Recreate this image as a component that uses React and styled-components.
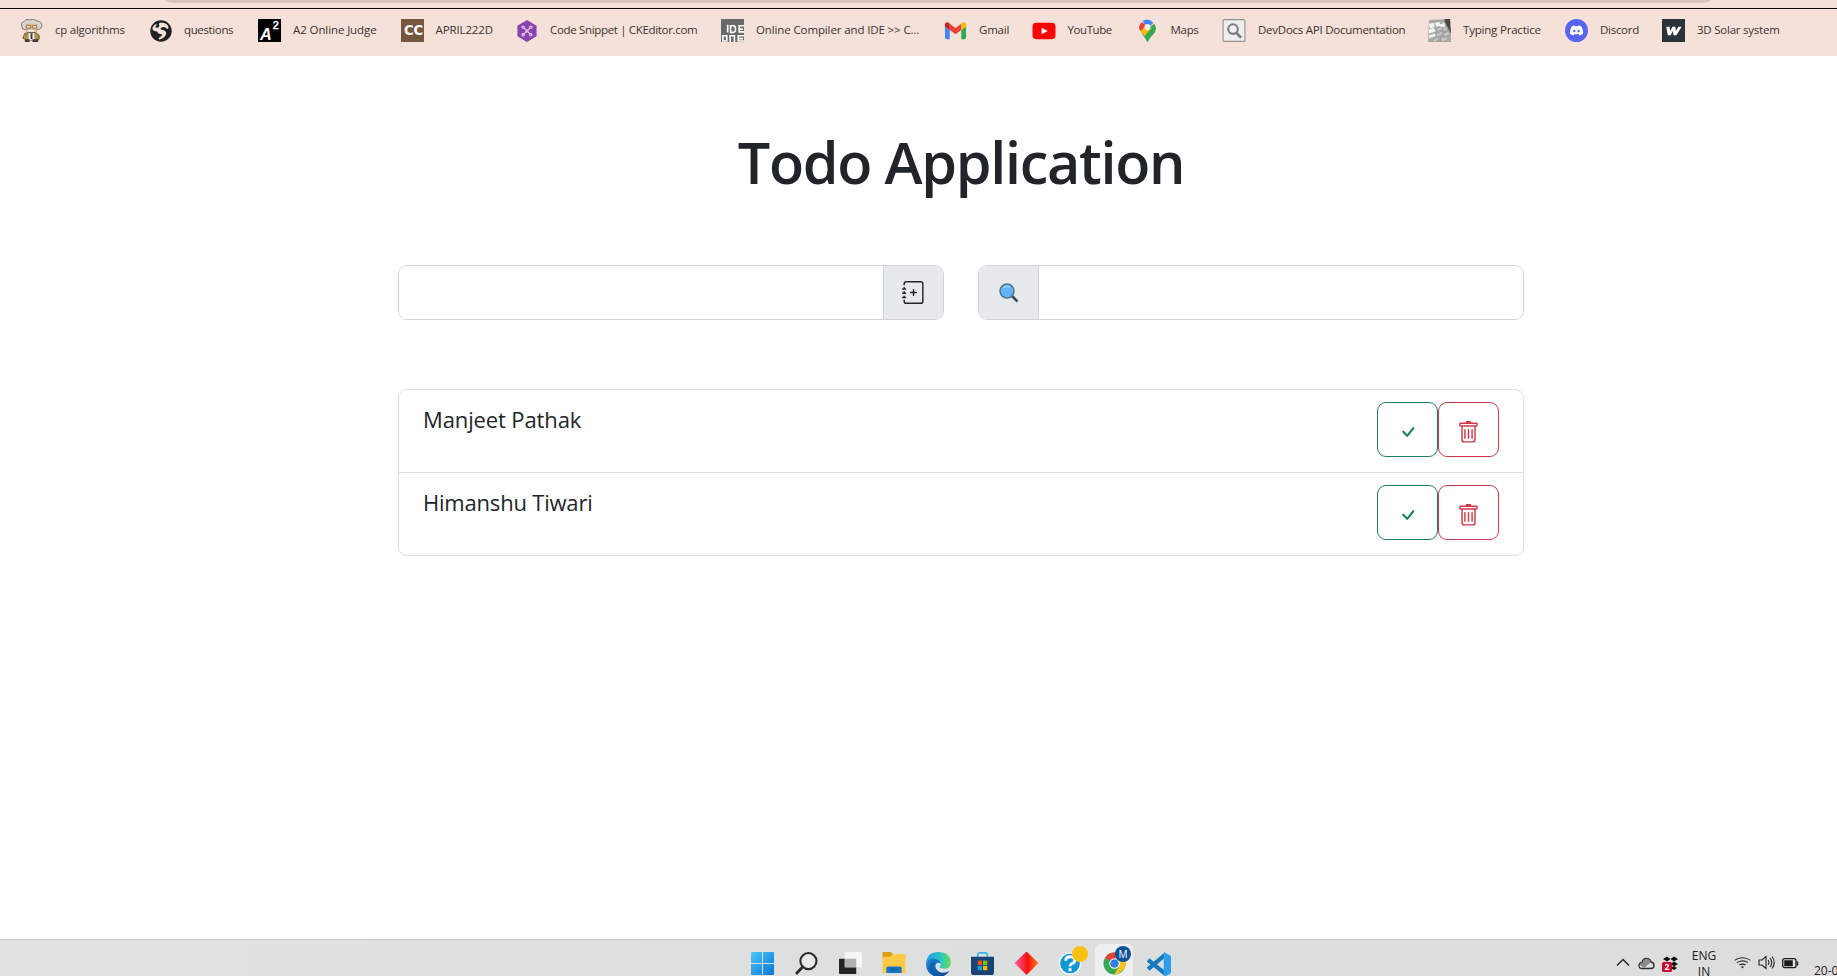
import React from "react";
import styled, { createGlobalStyle } from "styled-components";
import { BsJournalPlus, BsTrash, BsCheck, BsWifi } from "react-icons/bs";
import { FaDiscord } from "react-icons/fa";

const GlobalStyle = createGlobalStyle`
  * { box-sizing: border-box; }
  body { margin: 0; background: #fff; color: #212529; font-family: "Segoe UI", "Open Sans", "Noto Sans", sans-serif; }
  svg { display: block; }
`;

const Screen = styled.div`
  display: flex;
  flex-direction: column;
  width: 1837px;
  height: 976px;
  overflow: hidden;
`;

const AddressStrip = styled.div`
  height: 9px;
  flex: none;
  padding-left: 165px;
  background: #f5e1da;
  border-bottom: 1px solid #0b0808;
`;
const AddressField = styled.div`
  width: 1546px;
  height: 3px;
  background: #dac6be;
  border-radius: 0 0 10px 10px / 0 0 3px 3px;
`;

const BookmarkBar = styled.nav`
  display: flex;
  flex: none;
  height: 47px;
  padding: 0 0 5px 20px;
  background: #f5e1da;
`;
const Bookmark = styled.a`
  display: flex;
  flex: none;
  align-items: center;
  gap: 12px;
  width: ${(p) => p.$width}px;
  font-size: 11.5px;
  letter-spacing: ${(p) => p.$spacing}px;
  line-height: 16px;
  color: #3b3231;
  white-space: nowrap;
  svg { flex: none; }
`;

const Main = styled.main`
  flex: 1;
  display: flex;
  flex-direction: column;
  width: 1126px;
  margin-left: 398px;
`;
const Title = styled.h1`
  margin: 69px 0 0;
  height: 74px;
  line-height: 74px;
  font-size: 57.5px;
  font-weight: 600;
  letter-spacing: -1.3px;
  text-align: center;
`;
const Fields = styled.div`
  display: flex;
  justify-content: space-between;
  margin-top: 66px;
`;
const InputGroup = styled.div`
  display: flex;
  width: 546px;
  height: 55px;
  border: 1px solid #ced4da;
  border-radius: 9px;
  overflow: hidden;
`;
const TextInput = styled.input`
  flex: 1;
  min-width: 0;
  border: 0;
  outline: 0;
  padding: 0 17px;
  font: inherit;
  background: #fff;
`;
const Addon = styled.button`
  display: flex;
  align-items: center;
  justify-content: center;
  width: 60px;
  padding: 0;
  border: 0 solid #ced4da;
  border-${(p) => p.$divider}-width: 1px;
  color: #212529;
  background: #e7eaed;
`;

const TodoList = styled.ul`
  list-style: none;
  margin: 69px 0 0;
  padding: 0;
  border: 1px solid #dedfe0;
  border-radius: 9px;
`;
const TodoItem = styled.li`
  display: flex;
  justify-content: space-between;
  height: ${(p) => (p.$last ? 82 : 83)}px;
  padding: 12px 24px 0 24px;
  border-bottom: ${(p) => (p.$last ? 0 : 1)}px solid #dedfe0;
`;
const TodoText = styled.span`
  font-size: 22px;
  line-height: 34px;
  letter-spacing: ${(p) => p.$spacing}px;
`;
const Actions = styled.div`
  display: flex;
`;
const ActionButton = styled.button`
  display: flex;
  align-items: center;
  justify-content: center;
  width: 61px;
  height: 55px;
  padding: 5px 0 0;
  border: 1px solid ${(p) => p.$color};
  border-radius: 9px;
  color: ${(p) => p.$color};
  background: #fff;
`;

const Taskbar = styled.footer`
  display: flex;
  flex: none;
  height: 37px;
  border-top: 1px solid #c9cccd;
  background: linear-gradient(90deg, #e1e3e3, #dddede 55%, #dddddd);
  overflow: hidden;
`;
const Apps = styled.div`
  display: flex;
  margin-left: 740px;
`;
const AppCell = styled.div`
  display: flex;
  position: relative;
  flex: none;
  justify-content: center;
  width: 38px;
  height: 44px;
  margin: 4px 3px 0;
  padding-top: 8px;
  border-radius: 5px;
  background: ${(p) => (p.$active ? "#eeeeef" : "transparent")};
`;
const Badge = styled.span`
  position: absolute;
  left: ${(p) => p.$left}px;
  top: 2px;
  width: 16px;
  height: 16px;
  border-radius: 50%;
  background: ${(p) => p.$color};
  color: #fff;
  font-size: 10px;
  line-height: 16px;
  text-align: center;
`;
const Tray = styled.div`
  display: flex;
  margin-left: 436px;
  color: #222;
`;
const TrayIcon = styled.div`
  flex: none;
  width: ${(p) => p.$width}px;
  padding-top: ${(p) => p.$top}px;
`;
const Language = styled.div`
  flex: none;
  width: 26px;
  margin: 8px 17px 0 0;
  font-size: 12px;
  line-height: 16px;
  text-align: center;
`;
const DateText = styled.div`
  flex: none;
  padding-top: 23px;
  font-size: 12px;
  line-height: 16px;
  white-space: nowrap;
`;

const Icon = ({ children, w = 23, h = 23, ...rest }) => (
  <svg width={w} height={h} viewBox="0 0 24 24" {...rest}>{children}</svg>
);

const Professor = () => (
  <Icon>
    <path d="M2 8Q0 4 4 3Q6-1 10 1Q14-1 18 2Q23 3 23 7Q22 11 19 11L5 11Q2 11 2 8z" fill="#d8d6d2" stroke="#77716d" />
    <path d="M6 5h12v8l-3 3H9l-3-3z" fill="#dcae80" />
    <path d="M6.500 7h4.500v2.500H6.500zM13 7h4.500v2.500H13z" fill="#eee4c8" stroke="#80694c" strokeWidth=".8" />
    <path d="M8 12q4-2 8 0v2H8z" fill="#eee" />
    <path d="M5 15l4-1h7l4 3v4l-4 1H7l-4-2z" fill="#b4914f" stroke="#6d5637" />
    <path d="M9 15h6v7H9z" fill="#f3f1ed" /><path d="M11 15h2v6h-2z" fill="#36354b" />
    <path d="M5 21h5v3H5zM13 21h6v3h-6z" fill="#423e46" />
  </Icon>
);
const Globe = () => (
  <Icon>
    <circle cx="12.500" cy="12.500" r="11.200" fill="#202124" />
    <path d="M11.500 4Q18 3 20 7.500 21 10 19 10.500 17 8 14 8.500 11 9.500 12.500 11 17 11.500 18 14.500 17.500 19.500 11 21.500 9.500 21 10.500 19.500 14 18 13.500 16 9 15.500 8.500 13 3.500 13 3.500 9.500 5 6 8 5 8 7 6.500 8.500 9 10 11 7.500 9.500 5 11.500 4z" fill="#f5e1da" />
  </Icon>
);
const A2 = () => (
  <Icon>
    <path fill="#020202" d="M0 0h24v24H0z" />
    <text x="2" y="21.500" fontFamily="Liberation Sans" fontSize="17" fontWeight="700" fontStyle="italic" fill="#fff">A</text>
    <text x="15.5" y="10.500" fontFamily="Liberation Sans" fontSize="11.5" fill="#fff" stroke="#fff" strokeWidth=".5">2</text>
  </Icon>
);
const CodeChef = () => (
  <Icon>
    <path fill="#75563f" d="M0 0h24v24H0z" />
    <text x="3" y="17" fontFamily="DejaVu Sans" fontSize="14" fontWeight="700" textLength="20" lengthAdjust="spacingAndGlyphs" fill="#fff">CC</text>
  </Icon>
);
const CKEditor = () => (
  <Icon>
    <path d="M12.5 1L22.5 7v11l-10 6-10-6V7z" fill="#8745ab" />
    <g fill="none" stroke="#efcafa" strokeWidth="1.2">
      <path d="M9.500 9.500l2 2h2l2-2M9.500 15.500l2-2h2l2 2M11.500 11.500v2h2v-2z" />
      <circle cx="8.500" cy="8.500" r="1.200" /><circle cx="16.500" cy="8.500" r="1.200" />
      <circle cx="8.500" cy="16.500" r="1.200" /><circle cx="16.500" cy="16.500" r="1.200" />
    </g>
  </Icon>
);
const Ideone = () => (
  <Icon fill="none" stroke="#fff" strokeWidth="1.7">
    <path fill="#696969" stroke="none" d="M0 0h24v24H0z" />
    <path d="M7 6v8M10 7h3.500l1.500 1.500v4L13.500 14H10zM24 7h-5v6.500h5M19 10.500h4M2 17.500h4V23H2zM9.500 24v-6.500H14V24M24 17.500h-6V23h6M18 20.500h5" />
  </Icon>
);
const Gmail = () => (
  <Icon>
    <path fill="#4285f4" d="M1 8l5 3.500V21H3q-2 0-2-2z" />
    <path fill="#34a853" d="M18 11.500L23 8v11q0 2-2 2h-3z" />
    <path fill="#ea4335" d="M6 5l6 4.500L18 5v6.500L12 16l-6-4.500z" />
    <path fill="#c5221f" d="M1 8V6q0-4 4-2l1 1v6.500z" />
    <path fill="#fbbc04" d="M23 8V6q0-4-4-2l-1 1v6.500z" />
  </Icon>
);
const YouTube = () => (
  <Icon w={24}>
    <rect y="4" width="24" height="17" rx="4" fill="#f00" />
    <path d="M9.500 9l6.500 3.500L9.500 16z" fill="#fff" />
  </Icon>
);
const Maps = () => (
  <Icon>
    <path fill="#34a853" d="M12 24q-1 0-1.300-2L6 15 19 5q4 6-1 11-4 4-5 7z" />
    <path fill="#4285f4" d="M7 2q6-4 11 2l-6 7z" />
    <path fill="#ea4335" d="M6 3Q1 8 5 13L11 7z" />
    <path fill="#fbbc04" d="M5 13l4 5 7-9-8 0z" />
    <circle cx="12" cy="8.500" r="3.200" fill="#f6ece8" />
  </Icon>
);
const DevDocs = () => (
  <Icon w={24}>
    <rect x=".6" y=".6" width="22.800" height="22.800" rx="1" fill="#eee" stroke="#929292" strokeWidth="1.200" />
    <circle cx="11" cy="10.500" r="5" fill="none" stroke="#7b7e7b" strokeWidth="2.200" />
    <path d="M14.500 14.500l5 5" stroke="#7b7e7b" strokeWidth="2.800" />
  </Icon>
);
const Keyboard = () => (
  <Icon>
    <path d="M1 1l20-1 3 11v13H0z" fill="#a9a9a6" />
    <path d="M17 0h6l1 15L18 4z" fill="#454544" />
    <path d="M1 5l5-1 1 4-5 2zM7 4l5-1 1 4-4 1zM12 6l5-2 1 4-5 1zM1 11l5-2 2 4-7 2zM1 17l6-2 1 3-7 2z" fill="#f5f5f3" />
    <path d="M9 10l5-2 2 3-6 2zM15 9l4-1 2 4-5 1zM8 16l6-3 2 3-7 3zM16 15l5-2 2 3-6 3zM4 22l6-3 2 3-5 2zM13 20l6-2 2 3-6 3z" fill="#c6c6c3" stroke="#92928f" strokeWidth=".6" />
  </Icon>
);
const Discord = () => (
  <Icon>
    <circle cx="12" cy="12" r="12" fill="#5865f2" />
    <FaDiscord x="4.500" y="4.500" size={15} color="#fff" />
  </Icon>
);
const Webflow = () => (
  <Icon>
    <path fill="#2a333a" d="M0 0h24v24H0z" />
    <path d="M4.500 8H8l.5 4.500L11 8h3l.5 4.500L17 8h3.500l-5.500 9h-3l-.6-4.500L9 17H6z" fill="#fff" />
  </Icon>
);

const bookmarks = [
  ["cp algorithms", Professor, 129, -0.25],
  ["questions", Globe, 109, -0.36],
  ["A2 Online Judge", A2, 142.5, -0.1],
  ["APRIL222D", CodeChef, 114.5, -0.12],
  ["Code Snippet | CKEditor.com", CKEditor, 206, -0.33],
  ["Online Compiler and IDE >> C...", Ideone, 223, -0.12],
  ["Gmail", Gmail, 87.5, -0.2],
  ["YouTube", YouTube, 104, -0.42],
  ["Maps", Maps, 86.5, -0.3],
  ["DevDocs API Documentation", DevDocs, 206, -0.25],
  ["Typing Practice", Keyboard, 137, -0.2],
  ["Discord", Discord, 97, -0.28],
  ["3D Solar system", Webflow, 120, -0.23],
];

const Magnifier = () => (
  <svg width="22" height="22" viewBox="0 0 22 22">
    <path d="M14 14l5.500 5.500" stroke="#414b55" strokeWidth="2.600" />
    <circle cx="9" cy="9" r="7" fill="#61b4f8" stroke="#55728c" strokeWidth="1.500" />
    <path d="M5.500 6Q8.500 3 12 5.500" fill="none" stroke="#9bd2fb" strokeWidth="1.500" />
  </svg>
);

const Windows = () => (
  <Icon>
    <defs><linearGradient id="win" x2="1" y2="1"><stop stopColor="#4bc9fb" /><stop offset="1" stopColor="#0876d4" /></linearGradient></defs>
    <path fill="url(#win)" d="M1 0h10.500v11.500H0V1q0-1 1-1zM12.500 0H23q1 0 1 1v10.500H12.500zM0 12.500h11.500V24H1q-1 0-1-1zM12.500 12.500H24V23q0 1-1 1H12.500z" />
  </Icon>
);
const Search = () => (
  <Icon fill="none" stroke="#292929">
    <circle cx="14" cy="9.500" r="8.400" strokeWidth="2.200" fill="#e8e9e9" />
    <path d="M8 15.500L2 22" strokeWidth="3" strokeLinecap="round" />
  </Icon>
);
const TaskView = () => (
  <Icon>
    <path fill="#242424" d="M0 7h18v16H1q-1 0-1-1z" />
    <path fill="#f5f5f5" d="M6 0h17q1 0 1 1v15H6z" />
    <path fill="#b2b2b2" d="M6 7h12v9H6z" />
  </Icon>
);
const Explorer = () => (
  <Icon w={24}>
    <path d="M0 1q0-1 1-1h8l2 3v3H0z" fill="#dd9d13" />
    <path d="M0 5h8l3-3h12q1 0 1 1v19H0z" fill="#fdc947" />
    <path d="M4 22v-5q0-2 2-2h12q2 0 2 2v5z" fill="#1675c2" />
    <path d="M7 18h10" stroke="#0e5796" />
  </Icon>
);
const Edge = () => (
  <Icon w={25} h={25}>
    <defs>
      <linearGradient id="edgeTop"><stop stopColor="#239fe4" /><stop offset=".55" stopColor="#26c2c6" /><stop offset="1" stopColor="#6bdf57" /></linearGradient>
      <linearGradient id="edgeLow" x2="1" y2="1"><stop stopColor="#1789d8" /><stop offset="1" stopColor="#123f91" /></linearGradient>
    </defs>
    <path d="M0 11Q1 0 12 0q11 0 12 10 0 6-6 6-5 0-5-2 2-2 0-4-3-4-8-2-4 1-5 3z" fill="url(#edgeTop)" />
    <path d="M0 12Q1 6.500 7 6.500q6 0 7 4.500-4-2-5 2 0 6 7 7 4 0 6.500-2Q19 24 12 24 1 23 0 12z" fill="url(#edgeLow)" />
    <path d="M9 8.500q-3 3-2 7 2 7 9 7.500-2 1-4 1Q5 23 4 17q-1-6 5-8.500z" fill="#0f5cab" />
  </Icon>
);
const Store = () => (
  <Icon>
    <path d="M7 7V3q0-2 2-2h6q2 0 2 2v4" fill="none" stroke="#37b4e8" strokeWidth="1.800" />
    <path d="M0 5h24v16q0 3-3 3H3q-3 0-3-3z" fill="#1b4475" />
    <path d="M7 9h4.500v4.500H7z" fill="#f05024" /><path d="M12.500 9H17v4.500h-4.500z" fill="#7fba00" />
    <path d="M7 14.500h4.500V19H7z" fill="#0aa5ef" /><path d="M12.500 14.500H17V19h-4.500z" fill="#ffb901" />
  </Icon>
);
const Diamond = () => (
  <Icon w={25}>
    <defs><linearGradient id="dia"><stop stopColor="#ff5ba4" /><stop offset=".5" stopColor="#f11921" /><stop offset=".52" stopColor="#ff0b05" /><stop offset="1" stopColor="#ff7b25" /></linearGradient></defs>
    <path d="M12-.5L24.500 11.500 12 24-.5 11.500z" fill="url(#dia)" />
  </Icon>
);
const Help = () => (
  <Icon>
    <circle cx="11.500" cy="12" r="11" fill="#0d97d5" stroke="#f0fafe" strokeWidth="1.500" />
    <path d="M7 9q0-4 5-4 4.500 0 4.500 3.500 0 2.500-3 3.500-2 1-2 3M11.500 17v3" fill="none" stroke="#fff" strokeWidth="3" />
  </Icon>
);
const Chrome = () => (
  <Icon>
    <circle cx="12" cy="12" r="11.500" fill="#34a853" />
    <path d="M12 12L2 6Q6 0 13 .5 20 1 22.500 7H12z" fill="#e24437" />
    <path d="M12 7h10.500q3 8-3 13-3 3-8 3.500L17 15z" fill="#fbc116" />
    <circle cx="12" cy="12" r="5.500" fill="#fff" /><circle cx="12" cy="12" r="4.400" fill="#347de6" />
  </Icon>
);
const VSCode = () => (
  <Icon w={25} h={25}>
    <path d="M2 7.500l16 13M2 16.500L18 3" stroke="#1479bd" strokeWidth="4" />
    <path d="M17 0l6 3q1 .5 1 2v14q0 1.500-1 2l-6 3z" fill="#2ba0e9" />
  </Icon>
);

const apps = [
  { id: "start", Glyph: Windows },
  { id: "search", Glyph: Search },
  { id: "views", Glyph: TaskView },
  { id: "files", Glyph: Explorer },
  { id: "edge", Glyph: Edge },
  { id: "store", Glyph: Store },
  { id: "diamond", Glyph: Diamond },
  { id: "help", Glyph: Help, badge: "", badgeColor: "#fdbf12", badgeLeft: 21 },
  { id: "chrome", Glyph: Chrome, active: true, badge: "M", badgeColor: "#0b5394", badgeLeft: 20 },
  { id: "code", Glyph: VSCode },
];

const Chevron = () => (
  <svg width="14" height="9" viewBox="0 0 14 9"><path d="M1 7.500L7 1.500l6 6" fill="none" stroke="#222" strokeWidth="1.400" /></svg>
);
const Cloud = () => (
  <svg width="17" height="13" viewBox="0 0 17 13">
    <path d="M4 11.500Q1 11.500 1 8.500 1 6 4 5.500 5 1.500 8.500 1.500 12 1.500 13 5q3 .5 3 3.500 0 3-3 3z" fill="#ddd" stroke="#303030" strokeWidth="1.300" />
    <path d="M1.800 8Q2 6 4.500 6 5 2 8.500 2 12 2 12.500 5.500L6 11z" fill="#8b8b8b" />
  </svg>
);
const Dropbox = () => (
  <svg width="17" height="17" viewBox="0 0 17 17">
    <path d="M1 3l4-2.500L8.500 3 5 5.500zM8.500 3L12 .5 16 3l-4 2.500zM8.500 8L12 5.500 16 8l-4 2.500zM8.500 12L12 10l3 2-3 2z" fill="#111" />
    <rect y="6" width="10" height="10" rx="1.500" fill="#cc0a2c" />
    <text x="5" y="14" textAnchor="middle" fontSize="8.500" fontWeight="700" fill="#fff">2</text>
  </svg>
);
const Speaker = () => (
  <svg width="18" height="15" viewBox="0 0 18 15" fill="none" stroke="#222" strokeWidth="1.100">
    <path d="M1 5h3l4-3.500v12L4 10H1zM10 5q2 2.500 0 5M12 3q3.500 4.500 0 9M14 1.500q4.500 6 0 12" />
  </svg>
);
const Battery = () => (
  <svg width="17" height="11" viewBox="0 0 17 11">
    <rect x=".7" y=".7" width="13.300" height="9" rx="2" fill="none" stroke="#1d1d1d" strokeWidth="1.300" />
    <path d="M2.500 2.500h8v5.500h-8zM15 3.500l1 .5v3l-1 .5z" fill="#1d1d1d" stroke="#1d1d1d" strokeWidth=".5" />
  </svg>
);

const todos = [
  { text: "Manjeet Pathak", spacing: -0.12 },
  { text: "Himanshu Tiwari", spacing: -0.2 },
];

export default function App() {
  return (
    <Screen>
      <GlobalStyle />
      <AddressStrip><AddressField /></AddressStrip>
      <BookmarkBar>
        {bookmarks.map(([label, Glyph, width, spacing]) => (
          <Bookmark key={label} $width={width} $spacing={spacing}>
            <Glyph />
            <span>{label}</span>
          </Bookmark>
        ))}
      </BookmarkBar>
      <Main>
        <Title>Todo Application</Title>
        <Fields>
          <InputGroup>
            <TextInput aria-label="New todo" />
            <Addon $divider="left" aria-label="Add"><BsJournalPlus size={23} /></Addon>
          </InputGroup>
          <InputGroup>
            <Addon $divider="right" aria-label="Search"><Magnifier /></Addon>
            <TextInput aria-label="Search todos" />
          </InputGroup>
        </Fields>
        <TodoList>
          {todos.map((todo, i) => (
            <TodoItem key={todo.text} $last={i === todos.length - 1}>
              <TodoText $spacing={todo.spacing}>{todo.text}</TodoText>
              <Actions>
                <ActionButton $color="#208058" aria-label="Done"><BsCheck size={24} /></ActionButton>
                <ActionButton $color="#cd3b4a" aria-label="Delete"><BsTrash size={23} /></ActionButton>
              </Actions>
            </TodoItem>
          ))}
        </TodoList>
      </Main>
      <Taskbar>
        <Apps>
          {apps.map(({ id, Glyph, active, badge, badgeColor, badgeLeft }) => (
            <AppCell key={id} $active={active}>
              <Glyph />
              {badgeColor && <Badge $color={badgeColor} $left={badgeLeft}>{badge}</Badge>}
            </AppCell>
          ))}
        </Apps>
        <Tray>
          <TrayIcon $width={22} $top={18}><Chevron /></TrayIcon>
          <TrayIcon $width={24} $top={17}><Cloud /></TrayIcon>
          <TrayIcon $width={29} $top={16}><Dropbox /></TrayIcon>
          <Language>ENG<br />IN</Language>
          <TrayIcon $width={24} $top={14}><BsWifi size={17} /></TrayIcon>
          <TrayIcon $width={24} $top={15}><Speaker /></TrayIcon>
          <TrayIcon $width={32} $top={18}><Battery /></TrayIcon>
          <DateText>20-02</DateText>
        </Tray>
      </Taskbar>
    </Screen>
  );
}
